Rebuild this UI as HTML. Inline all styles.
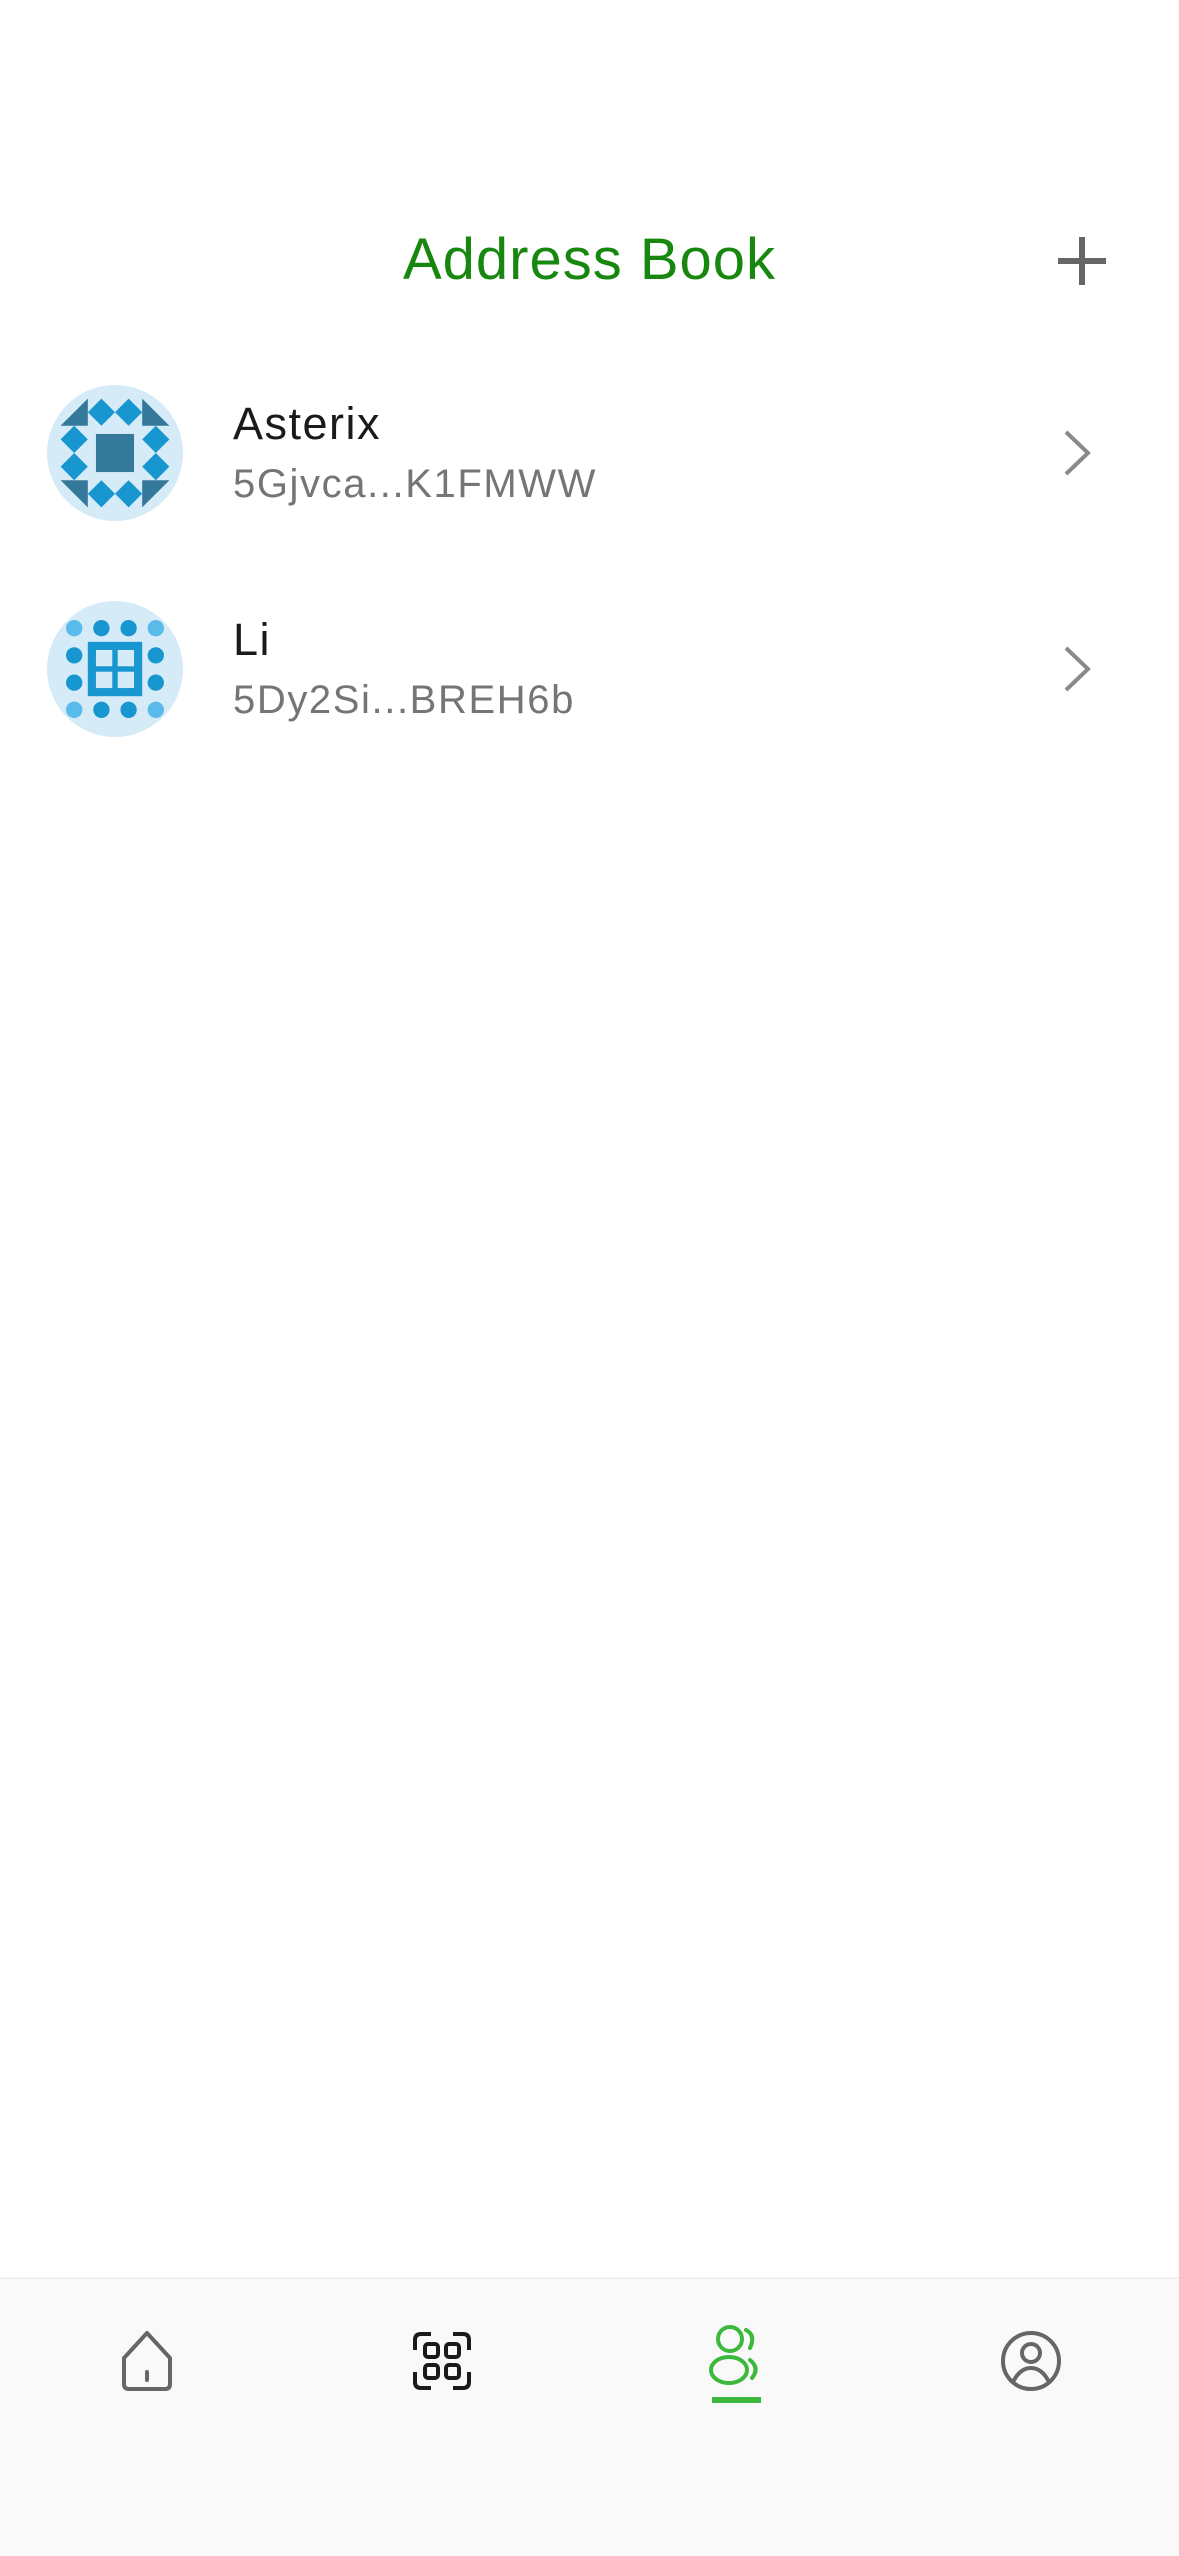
<!DOCTYPE html>
<html><head><meta charset="utf-8"><style>
*{margin:0;padding:0;box-sizing:border-box}
body{width:1179px;height:2556px;background:#fff;position:relative;font-family:"Liberation Sans",sans-serif;overflow:hidden}
.t{position:absolute;left:0;width:1179px;top:226px;text-align:center;font-size:58px;color:#17870f;letter-spacing:1px}
.plus{position:absolute;left:1056px;top:235px}
.av{position:absolute;left:47px;width:136px;height:136px}
.n{position:absolute;left:233px;font-size:45px;color:#1a1a1a;letter-spacing:1.5px}
.a{position:absolute;left:233px;font-size:40px;color:#757575;letter-spacing:1.6px}
.ch{position:absolute;left:1060px}
.bar{position:absolute;left:0;top:2277px;width:1179px;height:279px;background:#f9f9f9;border-top:2px solid #f0f0f0}
.ic{position:absolute;top:2330px}
</style></head><body>
<div class="t">Address Book</div>
<svg class="plus" width="52" height="52" viewBox="0 0 52 52"><path d="M26 2V50M2 26H50" stroke="#666" stroke-width="6"/></svg>

<svg class="av" style="top:385px" viewBox="0 0 100 100">
<circle cx="50" cy="50" r="50" fill="#d5ebf8"/>
<g fill="#34789a"><polygon points="30,10 30,30 10,30"/><polygon points="70,10 90,30 70,30"/><polygon points="10,70 30,70 30,90"/><polygon points="70,70 90,70 70,90"/><rect x="36" y="36" width="28" height="28"/></g>
<g fill="#1896cf"><polygon points="40,10 50,20 40,30 30,20"/><polygon points="60,10 70,20 60,30 50,20"/><polygon points="40,70 50,80 40,90 30,80"/><polygon points="60,70 70,80 60,90 50,80"/><polygon points="20,30 30,40 20,50 10,40"/><polygon points="20,50 30,60 20,70 10,60"/><polygon points="80,30 90,40 80,50 70,40"/><polygon points="80,50 90,60 80,70 70,60"/></g>
</svg>
<div class="n" style="top:398px">Asterix</div>
<div class="a" style="top:462px">5Gjvca...K1FMWW</div>
<svg class="ch" style="top:428px" width="34" height="50" viewBox="0 0 34 50"><path d="M6 4L28 25L6 46" fill="none" stroke="#8a8a8a" stroke-width="4"/></svg>

<svg class="av" style="top:601px" viewBox="0 0 100 100">
<circle cx="50" cy="50" r="50" fill="#d5ebf8"/>
<g fill="#58bbe9"><circle cx="20" cy="20" r="6"/><circle cx="80" cy="20" r="6"/><circle cx="20" cy="80" r="6"/><circle cx="80" cy="80" r="6"/></g>
<g fill="#1896cf"><circle cx="40" cy="20" r="6"/><circle cx="60" cy="20" r="6"/><circle cx="40" cy="80" r="6"/><circle cx="60" cy="80" r="6"/><circle cx="20" cy="40" r="6"/><circle cx="20" cy="60" r="6"/><circle cx="80" cy="40" r="6"/><circle cx="80" cy="60" r="6"/><rect x="30" y="30" width="40" height="40"/></g>
<g fill="#d5ebf8"><rect x="36" y="36" width="12" height="12"/><rect x="52" y="36" width="12" height="12"/><rect x="36" y="52" width="12" height="12"/><rect x="52" y="52" width="12" height="12"/></g>
</svg>
<div class="n" style="top:614px">Li</div>
<div class="a" style="top:678px">5Dy2Si...BREH6b</div>
<svg class="ch" style="top:644px" width="34" height="50" viewBox="0 0 34 50"><path d="M6 4L28 25L6 46" fill="none" stroke="#8a8a8a" stroke-width="4"/></svg>

<div class="bar"></div>
<svg class="ic" style="left:116px" width="62" height="62" viewBox="0 0 62 62"><path d="M31 3L8 28V54Q8 59 13 59H49Q54 59 54 54V28Z" fill="none" stroke="#666" stroke-width="4" stroke-linejoin="round"/><path d="M31 42V50" stroke="#666" stroke-width="4" stroke-linecap="round"/></svg>
<svg class="ic" style="left:411px" width="62" height="62" viewBox="0 0 62 62"><g fill="none" stroke="#1a1a1a" stroke-width="4"><path d="M4 20V10Q4 4 10 4H20M42 4H52Q58 4 58 10V20M58 42V52Q58 58 52 58H42M20 58H10Q4 58 4 52V42"/><rect x="14" y="14" width="13" height="13" rx="3"/><rect x="35" y="14" width="13" height="13" rx="3"/><rect x="14" y="35" width="13" height="13" rx="3"/><rect x="35" y="35" width="13" height="13" rx="3"/></g></svg>
<svg class="ic" style="left:706px;top:2322px" width="62" height="70" viewBox="0 0 62 70"><g fill="none" stroke="#3cb83c" stroke-width="4" stroke-linecap="round"><circle cx="24" cy="17" r="12"/><path d="M40 8Q50 13 44 26"/><ellipse cx="23" cy="48" rx="18" ry="13"/><path d="M44 38Q54 46 46 56"/></g></svg>
<div style="position:absolute;left:712px;top:2397px;width:49px;height:6px;background:#3cb83c"></div>
<svg class="ic" style="left:1000px" width="62" height="62" viewBox="0 0 62 62"><g fill="none" stroke="#666" stroke-width="4"><circle cx="31" cy="31" r="28"/><circle cx="31" cy="23" r="9"/><path d="M13 52Q20 38 31 38Q42 38 49 52"/></g></svg>
</body></html>
